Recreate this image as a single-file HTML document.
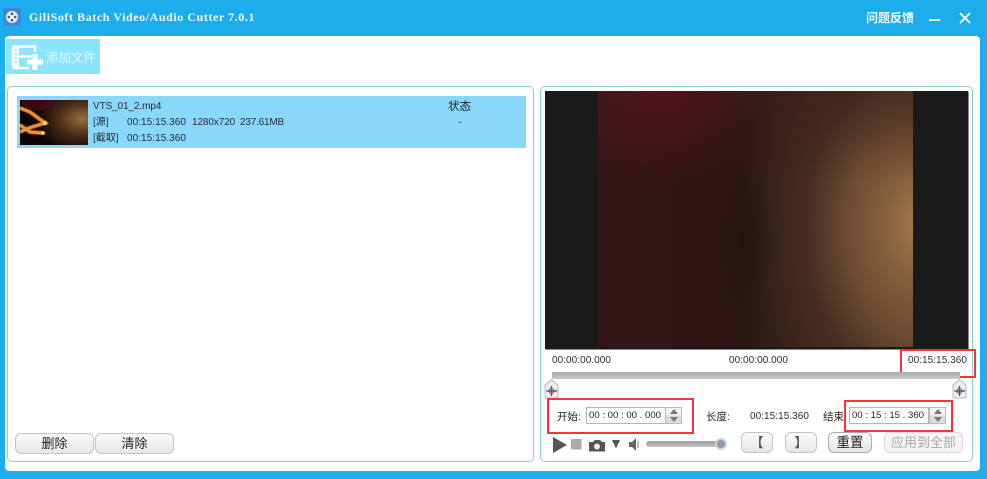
<!DOCTYPE html>
<html><head><meta charset="utf-8">
<style>
html,body{margin:0;padding:0;width:987px;height:479px;overflow:hidden;background:#1caeec}
body{position:relative;font-family:"Liberation Sans","Noto Sans CJK SC",sans-serif;color:#222}
.a{position:absolute}
.t{position:absolute;white-space:nowrap;font-size:10px;line-height:12px;color:#2a2a3a}
.z{position:absolute;white-space:nowrap;font-size:12px;line-height:14px;color:#222}
.btn{position:absolute;box-sizing:border-box;border:1px solid #c4c4c4;border-radius:6px;background:linear-gradient(#fbfbfb,#e6e6e6);text-align:center;font-size:13px;color:#222}
.spin{position:absolute;box-sizing:border-box;height:17px;border:1px solid #b5b5b5;background:#fff;font-size:9.6px;line-height:15px;color:#223;white-space:pre;padding-left:2px;overflow:hidden}
.sp{position:absolute;box-sizing:border-box;width:17px;height:17px;border:1px solid #bbb;background:linear-gradient(#f2f2f2 50%,#dcdcdc 50%)}
.red{position:absolute;box-sizing:border-box;border:2px solid #f5333a}
</style></head><body>
<!-- window -->
<div class="a" style="left:5px;top:36px;width:975px;height:435px;background:#fff;border-radius:4px"></div>
<!-- app icon -->
<div class="a" style="left:3px;top:8px;width:18px;height:18px;background:#3f86dc;border-radius:2px"></div>
<svg class="a" style="left:4px;top:9px" width="16" height="16" viewBox="0 0 16 16"><circle cx="8" cy="8" r="6" fill="#e6eef6"/><circle cx="8" cy="4.8" r="1.3" fill="#4a5a70"/><circle cx="8" cy="11.2" r="1.3" fill="#4a5a70"/><circle cx="4.8" cy="8" r="1.3" fill="#4a5a70"/><circle cx="11.2" cy="8" r="1.3" fill="#4a5a70"/></svg>
<div class="a" style="left:29px;top:9px;font:bold 12px/17px 'Liberation Serif',serif;letter-spacing:.57px;color:#eef9ff;white-space:nowrap">GiliSoft Batch Video/Audio Cutter 7.0.1</div>
<div class="a" style="left:866px;top:11px;font-size:12px;line-height:14px;color:#fff;white-space:nowrap;font-weight:bold">问题反馈</div>
<div class="a" style="left:929px;top:19px;width:11px;height:2px;background:#fff"></div>
<svg class="a" style="left:959px;top:12px" width="12" height="12" viewBox="0 0 12 12"><path d="M1 1L11 11M11 1L1 11" stroke="#fff" stroke-width="1.8" fill="none"/></svg>

<!-- add button -->
<div class="a" style="left:6px;top:39px;width:94px;height:35px;background:#8ae4fb"></div>
<svg class="a" style="left:10px;top:43px" width="36" height="30" viewBox="0 0 36 30">
<path d="M25 9V3.500H5Q3 3.500 3 5.500V23Q3 25 5 25H19" fill="none" stroke="#fff" stroke-width="2.6"/>
<rect x="3" y="3" width="6" height="22" fill="#fff"/>
<path d="M4.500 7h2.500M4.500 11h2.500M4.500 15h2.500M4.500 19h2.500" stroke="#8ae4fb" stroke-width="1.5"/>
<path d="M9 13.500H22" stroke="#fff" stroke-width="2.6"/>
<path d="M25 11V27M17 19H33" stroke="#fff" stroke-width="5" fill="none"/></svg>
<div class="a" style="left:46px;top:51px;font-size:12.500px;line-height:15px;color:#e4f9ff;white-space:nowrap">添加文件</div>

<!-- left panel -->
<div class="a" style="box-sizing:border-box;left:7px;top:86px;width:527px;height:376px;border:1px solid #8fcbd8;border-radius:5px;background:#fff"></div>
<div class="a" style="left:17px;top:96px;width:509px;height:52px;background:#87d8fb"></div>
<svg class="a" style="left:20px;top:100px" width="68" height="45" viewBox="0 0 68 45">
<defs><radialGradient id="g" cx="92%" cy="42%" r="72%"><stop offset="0" stop-color="#94703c"/><stop offset=".5" stop-color="#4a2c18"/><stop offset="1" stop-color="#120606"/></radialGradient>
<linearGradient id="d" x1="0" x2="1" y1="0" y2="0"><stop offset="0" stop-color="#0c0404" stop-opacity=".95"/><stop offset="1" stop-color="#0c0404" stop-opacity="0"/></linearGradient></defs>
<rect width="68" height="45" fill="url(#g)"/><rect y="15" width="34" height="30" fill="url(#d)"/><rect width="36" height="14" fill="url(#d)" opacity=".4"/><ellipse cx="18" cy="2" rx="16" ry="8" fill="#5a0c1c" opacity=".6"/>
<path d="M0 8L10 12L25 23L9 28L0 32M0 25L10 32L23 33" stroke="#a03a30" stroke-width="4.500" fill="none"/>
<path d="M0 8L10 12L25 23L9 28L0 32M0 25L10 32L23 33" stroke="#e09a30" stroke-width="2.800" fill="none"/>
<circle cx="25" cy="23" r="2.200" fill="#ffe620"/><circle cx="23" cy="33" r="1.900" fill="#ffe620"/></svg>
<div class="t" style="left:93px;top:101px;letter-spacing:-.1px">VTS_01_2.mp4</div>
<div class="t" style="left:93px;top:117px">[源]</div>
<div class="t" style="left:127px;top:117px;letter-spacing:.05px">00:15:15.360</div>
<div class="t" style="left:192px;top:117px;letter-spacing:-.1px">1280x720</div>
<div class="t" style="left:240px;top:117px;letter-spacing:-.2px">237.61MB</div>
<div class="t" style="left:93px;top:133px">[截取]</div>
<div class="t" style="left:127px;top:133px;letter-spacing:.05px">00:15:15.360</div>
<div class="z" style="left:448px;top:100px;font-size:11.500px">状态</div>
<div class="t" style="left:458px;top:117px">-</div>

<div class="btn" style="left:15px;top:433px;width:79px;height:21px;line-height:19px">删除</div>
<div class="btn" style="left:95px;top:433px;width:79px;height:21px;line-height:19px">清除</div>

<!-- right panel -->
<div class="a" style="box-sizing:border-box;left:540px;top:86px;width:433px;height:376px;border:1px solid #8fcbd8;border-radius:5px;background:#fff"></div>
<div class="a" style="left:545px;top:91px;width:423px;height:258px;background:#1a1a1a;box-shadow:1px 1px 0 #888"></div>
<div class="a" style="left:598px;top:91px;width:315px;height:256px;background:
radial-gradient(ellipse 30px 75px at 148px 150px,rgba(32,20,16,.8),rgba(32,20,16,0)),
radial-gradient(ellipse 95px 100px at 60px 0px,rgba(92,12,34,.7),rgba(92,12,34,0)),
linear-gradient(180deg,rgba(62,32,26,.55) 0%,rgba(62,32,26,0) 35%),
radial-gradient(ellipse 180px 260px at 325px 135px,#a87c4a 0%,#85603c 22%,#6c4c33 42%,rgba(76,50,34,.7) 65%,rgba(60,35,28,0) 100%),
linear-gradient(90deg,#331618 0%,#2c1513 45%,#34201a 65%,#44301f 100%)"></div>

<div class="t" style="left:552px;top:355px;letter-spacing:.05px">00:00:00.000</div>
<div class="t" style="left:729px;top:355px;letter-spacing:.05px">00:00:00.000</div>
<div class="t" style="left:908px;top:355px;letter-spacing:.05px">00:15:15.360</div>
<div class="red" style="left:900px;top:349px;width:76px;height:29px"></div>

<!-- slider -->
<div class="a" style="left:552px;top:372px;width:408px;height:7px;background:linear-gradient(#a9a9a9,#c9c9c9)"></div>
<svg class="a" style="left:544px;top:379px" width="16" height="20" viewBox="0 0 16 20"><path d="M1 6L7.500 .5L14 6V18Q14 19 13 19H2Q1 19 1 18Z" fill="#eee" stroke="#bbb"/><path d="M7.500 7V17M2.500 12H13" stroke="#555" stroke-width="1.400"/><circle cx="7.500" cy="12" r="2.500" fill="none" stroke="#666"/></svg>
<svg class="a" style="left:952px;top:379px" width="16" height="20" viewBox="0 0 16 20"><path d="M1 6L7.500 .5L14 6V18Q14 19 13 19H2Q1 19 1 18Z" fill="#eee" stroke="#bbb"/><path d="M7.500 7V17M2.500 12H13" stroke="#555" stroke-width="1.400"/><circle cx="7.500" cy="12" r="2.500" fill="none" stroke="#666"/></svg>

<!-- start -->
<div class="z" style="left:557px;top:410px;font-size:10.500px">开始:</div>
<div class="spin" style="left:586px;top:407px;width:80px">00 : 00 : 00 . 000</div>
<div class="sp" style="left:665px;top:407px"></div>
<div class="a" style="left:670px;top:409px;border:4px solid transparent;border-top:0;border-bottom:5px solid #777"></div>
<div class="a" style="left:670px;top:417px;border:4px solid transparent;border-bottom:0;border-top:5px solid #777"></div>
<div class="red" style="left:547px;top:398px;width:147px;height:36px"></div>
<div class="a" style="left:549px;top:400px;width:2px;height:32px;background:#fff"></div>

<div class="z" style="left:706px;top:410px;font-size:10.500px">长度:</div>
<div class="t" style="left:750px;top:410px;letter-spacing:.05px;line-height:13px">00:15:15.360</div>
<div class="z" style="left:823px;top:410px;font-size:10.500px">结束:</div>
<div class="spin" style="left:849px;top:407px;width:80px">00 : 15 : 15 . 360</div>
<div class="sp" style="left:929px;top:407px"></div>
<div class="a" style="left:934px;top:409px;border:4px solid transparent;border-top:0;border-bottom:5px solid #777"></div>
<div class="a" style="left:934px;top:417px;border:4px solid transparent;border-bottom:0;border-top:5px solid #777"></div>
<div class="red" style="left:844px;top:400px;width:109px;height:32px"></div>

<!-- transport -->
<svg class="a" style="left:552px;top:436px" width="100" height="18" viewBox="0 0 100 18">
<path d="M1 1L15 9L1 17Z" fill="#555"/>
<rect x="19" y="3" width="10.500" height="10.500" fill="#aaa"/>
<path d="M37 6H41L43 4H48L50 6H53V15.500H37Z" fill="#555"/><circle cx="45" cy="10.500" r="3" fill="#eee"/>
<path d="M60 4H68L64 12.500Z" fill="#555"/></svg>
<svg class="a" style="left:628px;top:437px" width="14" height="15" viewBox="0 0 14 15"><path d="M1 5H4L8 1V14L4 10H1Z" fill="#666"/><path d="M10 4V11" stroke="#aaa" stroke-width="1.500"/></svg>
<div class="a" style="left:646px;top:441px;width:76px;height:6px;border-radius:3px;background:linear-gradient(#9e9e9e,#c6c6c6)"></div>
<div class="a" style="left:715px;top:438px;width:12px;height:12px;border-radius:50%;background:#8d99aa;border:2px solid #d2d2d2;box-sizing:border-box"></div>

<div class="btn" style="left:741px;top:432px;width:32px;height:21px;line-height:19px;font-weight:bold;color:#555">【</div>
<div class="btn" style="left:785px;top:432px;width:32px;height:21px;line-height:19px;font-weight:bold;color:#555">】</div>
<div class="btn" style="left:828px;top:432px;width:44px;height:21px;line-height:19px;border-color:#aaa;font-size:13.500px;color:#222">重置</div>
<div class="btn" style="left:884px;top:432px;width:79px;height:21px;line-height:19px;color:#aaa;background:#f4f4f4;border-color:#d8d8d8">应用到全部</div>
</body></html>
